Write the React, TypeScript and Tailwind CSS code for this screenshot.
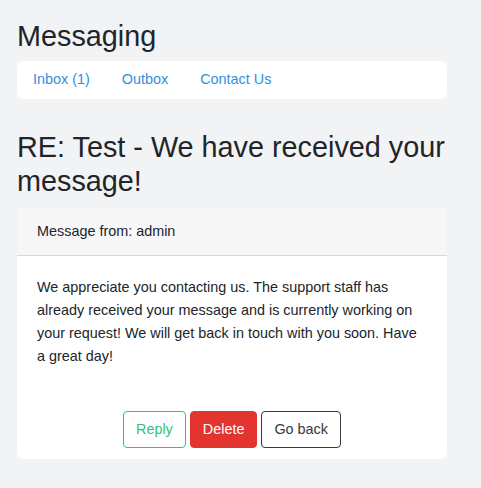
export default function App() {
  const links = ["Inbox (1)", "Outbox", "Contact Us"];

  return (
    <div className="min-h-screen bg-[#f2f3f5] pt-[19px] font-['Liberation_Sans',Arial,sans-serif] text-[#212529]">
      <div className="ml-[17px] w-[430px]">
        {/* Page heading */}
        <h1 className="text-[28.8px] leading-[1.2] mb-[7px]">Messaging</h1>

        {/* Nav */}
        <nav className="flex items-center h-[38px] bg-white rounded-md">
          {links.map((l) => (
            <a key={l} href="#" className="px-4 text-[14.4px] leading-[23px] text-[#3490dc]">
              {l}
            </a>
          ))}
        </nav>

        {/* Message subject */}
        <h2 className="mt-[31px] mb-[9px] text-[28.8px] leading-[1.2]">
          RE: Test - We have received your message!
        </h2>

        {/* Message card */}
        <div className="bg-white rounded-md overflow-hidden">
          <div className="px-5 py-3 bg-[#f7f7f7] border-b border-[rgba(0,0,0,0.125)] text-[14.4px] leading-[23px]">
            Message from: admin
          </div>
          <div className="px-5 pt-5 pb-[11px]">
            <p className="text-[14.4px] leading-[23px]">
              We appreciate you contacting us. The support staff has already received your message
              and is currently working on your request! We will get back in touch with you soon.
              Have a great day!
            </p>
            <div className="mt-[43px] flex justify-center gap-1">
              <button className="px-3 py-[6px] text-[14.4px] leading-[23px] rounded border border-[#38c172] text-[#38c172] bg-white">
                Reply
              </button>
              <button className="px-3 py-[6px] text-[14.4px] leading-[23px] rounded border border-[#e3342f] text-white bg-[#e3342f]">
                Delete
              </button>
              <button className="px-3 py-[6px] text-[14.4px] leading-[23px] rounded border border-[#343a40] text-[#343a40] bg-white">
                Go back
              </button>
            </div>
          </div>
        </div>
      </div>
    </div>
  );
}
